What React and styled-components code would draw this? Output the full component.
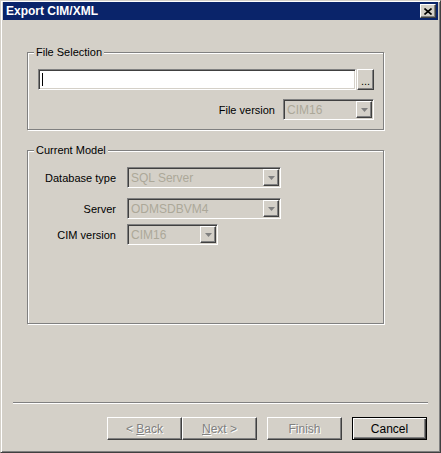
import styled, { createGlobalStyle } from 'styled-components';

const GlobalStyle = createGlobalStyle`
  html, body {
    margin: 0;
    padding: 0;
    background: #d4d0c8;
  }
  body {
    font-family: "Liberation Sans", Arial, sans-serif;
    font-size: 11px;
    color: #000;
  }
`;

const Window = styled.div`
  box-sizing: border-box;
  width: 441px;
  height: 453px;
  display: flex;
  flex-direction: column;
  padding: 1px 2px 2px;
  background: #d4d0c8;
  border: 1px solid;
  border-color: #d4d0c8 #404040 #404040 #d4d0c8;
  box-shadow: inset 1px 1px #fff, inset -1px -1px #808080;
`;

const TitleBar = styled.div`
  flex: none;
  height: 18px;
  display: flex;
  align-items: center;
  justify-content: space-between;
  padding: 0 2px 0 3px;
  background: #0a246a;
  color: #fff;
  font-weight: bold;
  font-size: 12px;
`;

const CloseButton = styled.div`
  box-sizing: border-box;
  width: 16px;
  height: 14px;
  display: flex;
  align-items: center;
  justify-content: center;
  background: #d4d0c8;
  border: 1px solid;
  border-color: #fff #404040 #404040 #fff;
  box-shadow: inset -1px -1px #808080;
`;

const Content = styled.div`
  flex: 1;
  display: flex;
  flex-direction: column;
  padding: 32px 0 0 24px;
`;

const Group = styled.div`
  position: relative;
  box-sizing: border-box;
  width: 357px;
  height: ${(p) => p.$height}px;
  margin-top: ${(p) => p.$top || 0}px;
  padding: 16px 0 0 ${(p) => p.$left}px;
  border: 1px solid #808080;
  box-shadow: inset 1px 1px #fff, 1px 1px #fff;
`;

const Legend = styled.span`
  position: absolute;
  top: -7px;
  left: 6px;
  padding: 0 2px;
  line-height: 13px;
  background: #d4d0c8;
`;

const FileRow = styled.div`
  display: flex;
  gap: 1px;
`;

const TextField = styled.div`
  box-sizing: border-box;
  width: 318px;
  height: 21px;
  display: flex;
  align-items: center;
  padding-left: 1px;
  background: #fff;
  border: 1px solid;
  border-color: #808080 #fff #fff #808080;
  box-shadow: inset 1px 1px #404040, inset -1px -1px #d4d0c8;
`;

const Caret = styled.span`
  width: 1px;
  height: 13px;
  margin-left: 2px;
  background: #000;
`;

const RaisedButton = styled.div`
  box-sizing: border-box;
  display: flex;
  align-items: center;
  justify-content: center;
  background: #d4d0c8;
  border: 1px solid;
  border-color: #fff #404040 #404040 #fff;
  box-shadow: inset -1px -1px #808080;
`;

const BrowseButton = styled(RaisedButton)`
  width: 17px;
  height: 21px;
  padding-top: 3px;
  font-size: 11px;
`;

const VersionRow = styled.div`
  width: 336px;
  margin-top: 9px;
  display: flex;
  align-items: center;
  justify-content: flex-end;
  gap: 8px;
`;

const Field = styled.div`
  display: flex;
  align-items: center;
  margin-top: ${(p) => p.$top || 0}px;
`;

const FieldLabel = styled.span`
  width: 80px;
  margin-right: 11px;
  text-align: right;
`;

const Combo = styled.div`
  box-sizing: border-box;
  width: ${(p) => p.$width}px;
  height: 21px;
  display: flex;
  align-items: center;
  padding: 1px;
  background: #d4d0c8;
  border: 1px solid;
  border-color: #808080 #fff #fff #808080;
  box-shadow: inset 1px 1px #404040, inset -1px -1px #d4d0c8;
`;

const ComboValue = styled.span`
  flex: 1;
  padding-left: 2px;
  color: #aca899;
  font-size: 12px;
`;

const ComboArrow = styled(RaisedButton)`
  width: 16px;
  height: 17px;
`;

const Separator = styled.div`
  margin: auto 10px 0;
  border-top: 1px solid #808080;
  border-bottom: 1px solid #fff;
`;

const ButtonRow = styled.div`
  display: flex;
  justify-content: flex-end;
  padding: 13px 11px 10px 0;
`;

const Button = styled.div`
  box-sizing: border-box;
  width: 75px;
  height: 23px;
  margin-left: ${(p) => p.$gap || 0}px;
  display: flex;
  align-items: center;
  justify-content: center;
  background: #d4d0c8;
  border: 1px solid;
  border-color: ${(p) => (p.$default ? '#000' : '#fff #404040 #404040 #fff')};
  box-shadow: ${(p) =>
    p.$default
      ? 'inset 1px 1px #fff, inset -1px -1px #404040, inset -2px -2px #808080'
      : 'inset -1px -1px #808080'};
  color: ${(p) => (p.$disabled ? '#808080' : '#000')};
  text-shadow: ${(p) => (p.$disabled ? '1px 1px #fff' : 'none')};
  font-size: 12px;
`;

const CloseIcon = () => (
  <svg width="8" height="7" viewBox="0 0 8 7">
    <path d="M0.5 0.5 L7.5 6.5 M7.5 0.5 L0.5 6.5" stroke="#000" strokeWidth="1.6" />
  </svg>
);

const ArrowIcon = () => (
  <svg width="7" height="4" viewBox="0 0 7 4">
    <path d="M0 0 H7 L3.5 4 Z" fill="#808080" />
  </svg>
);

const ComboBox = ({ width, value }) => (
  <Combo $width={width}>
    <ComboValue>{value}</ComboValue>
    <ComboArrow>
      <ArrowIcon />
    </ComboArrow>
  </Combo>
);

export default function App() {
  return (
    <>
      <GlobalStyle />
      <Window>
        <TitleBar>
          <span>Export CIM/XML</span>
          <CloseButton>
            <CloseIcon />
          </CloseButton>
        </TitleBar>

        <Content>
          <Group $height={78} $left={10}>
            <Legend>File Selection</Legend>
            <FileRow>
              <TextField>
                <Caret />
              </TextField>
              <BrowseButton>...</BrowseButton>
            </FileRow>
            <VersionRow>
              <span>File version</span>
              <ComboBox width={91} value="CIM16" />
            </VersionRow>
          </Group>

          <Group $height={174} $left={8} $top={20}>
            <Legend>Current Model</Legend>
            <Field>
              <FieldLabel>Database type</FieldLabel>
              <ComboBox width={154} value="SQL Server" />
            </Field>
            <Field $top={10}>
              <FieldLabel>Server</FieldLabel>
              <ComboBox width={154} value="ODMSDBVM4" />
            </Field>
            <Field $top={5}>
              <FieldLabel>CIM version</FieldLabel>
              <ComboBox width={91} value="CIM16" />
            </Field>
          </Group>
        </Content>

        <Separator />

        <ButtonRow>
          <Button $disabled>
            &lt;&nbsp;<u>B</u>ack
          </Button>
          <Button $disabled>
            <u>N</u>ext&nbsp;&gt;
          </Button>
          <Button $disabled $gap={10}>
            Finish
          </Button>
          <Button $default $gap={10}>
            Cancel
          </Button>
        </ButtonRow>
      </Window>
    </>
  );
}
